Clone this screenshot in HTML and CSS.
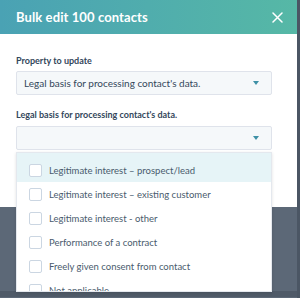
FILE: index.html
```html
<!DOCTYPE html>
<html lang="en">
<head>
    <meta charset="UTF-8">
    <meta name="viewport" content="width=device-width, initial-scale=1.0">
    <title>Bulk edit</title>
    <link rel="stylesheet" href="styles.css">
</head>
<body>
    <div class="page">
        <div class="modal">
            <div class="modal-header">
                <h1 class="modal-title">Bulk edit 100 contacts</h1>
                <svg class="close" width="11" height="11" viewBox="0 0 11 11">
                    <path d="M1 1 L10 10 M10 1 L1 10" stroke="#fff" stroke-width="1.5" stroke-linecap="round"/>
                </svg>
            </div>
            <div class="modal-body">
                <label class="field-label">Property to update</label>
                <div class="select">
                    <span>Legal basis for processing contact's data.</span>
                    <span class="caret"></span>
                </div>
                <label class="field-label second">Legal basis for processing contact's data.</label>
                <div class="select">
                    <span></span>
                    <span class="caret"></span>
                </div>
            </div>
        </div>
        <div class="footer-strip"></div>

        <!-- open dropdown menu over the modal -->
        <ul class="menu">
            <li class="option active"><span class="box"></span>Legitimate interest – prospect/lead</li>
            <li class="option"><span class="box"></span>Legitimate interest – existing customer</li>
            <li class="option"><span class="box"></span>Legitimate interest - other</li>
            <li class="option"><span class="box"></span>Performance of a contract</li>
            <li class="option"><span class="box"></span>Freely given consent from contact</li>
            <li class="option"><span class="box"></span>Not applicable</li>
        </ul>
    </div>
</body>
</html>
```

FILE: styles.css
```css
body {
    margin: 0;
    background-color: #5c6877;
    font-family: Lato, "Open Sans", sans-serif;
    color: #33475b;
}

.page {
    position: relative;
    width: 300px;
    height: 298px;
    overflow: hidden;
    border-right: 3px solid #4b5664;
    box-sizing: border-box;
}

.modal {
    width: 297px;
    background-color: #ffffff;
}

.modal-header {
    height: 34px;
    display: flex;
    align-items: center;
    justify-content: space-between;
    padding: 0 14px 0 16px;
    box-sizing: border-box;
    background: linear-gradient(to right, #4aa2b4, #56b8a6);
}

.modal-title {
    margin: 0;
    font-size: 13px;
    font-weight: bold;
    color: #ffffff;
    letter-spacing: 0.1px;
}

.modal-body {
    height: 173px;
    padding: 21px 25px 0 16px;
    box-sizing: border-box;
}

.field-label {
    display: block;
    font-size: 9px;
    font-weight: bold;
    line-height: 12px;
    margin-bottom: 4px;
    color: #33475b;
}

.field-label.second {
    margin-top: 14px;
    margin-bottom: 5px;
}

.select {
    height: 24px;
    display: flex;
    align-items: center;
    justify-content: space-between;
    padding: 0 12px 0 7px;
    box-sizing: border-box;
    background-color: #f5f8fa;
    border: 1px solid #dfe3eb;
    border-radius: 2px;
    font-size: 10px;
    color: #33475b;
}

.caret {
    width: 0;
    height: 0;
    border-left: 3.5px solid transparent;
    border-right: 3.5px solid transparent;
    border-top: 4px solid #3e90a6;
}

.footer-strip {
    margin-top: 84px;
    height: 6px;
    background-color: #4f5a68;
}

.menu {
    position: absolute;
    left: 16px;
    top: 152px;
    width: 256px;
    height: 140px;
    margin: 0;
    padding: 0;
    list-style: none;
    background-color: #ffffff;
    border: 1px solid #e4e8ee;
    box-sizing: border-box;
    box-shadow: 0 1px 3px rgba(0, 0, 0, 0.12);
    overflow: hidden;
}

.option {
    height: 24px;
    display: flex;
    align-items: center;
    gap: 7px;
    padding-left: 12px;
    font-size: 9.5px;
    color: #4a5b6d;
}

.option.active {
    height: 29px;
    padding-top: 5px;
    box-sizing: border-box;
    background-color: #e6f4f7;
}

.box {
    width: 11px;
    height: 11px;
    flex-shrink: 0;
    border: 1px solid #cbd6e2;
    border-radius: 2px;
    background-color: #ffffff;
}
```
